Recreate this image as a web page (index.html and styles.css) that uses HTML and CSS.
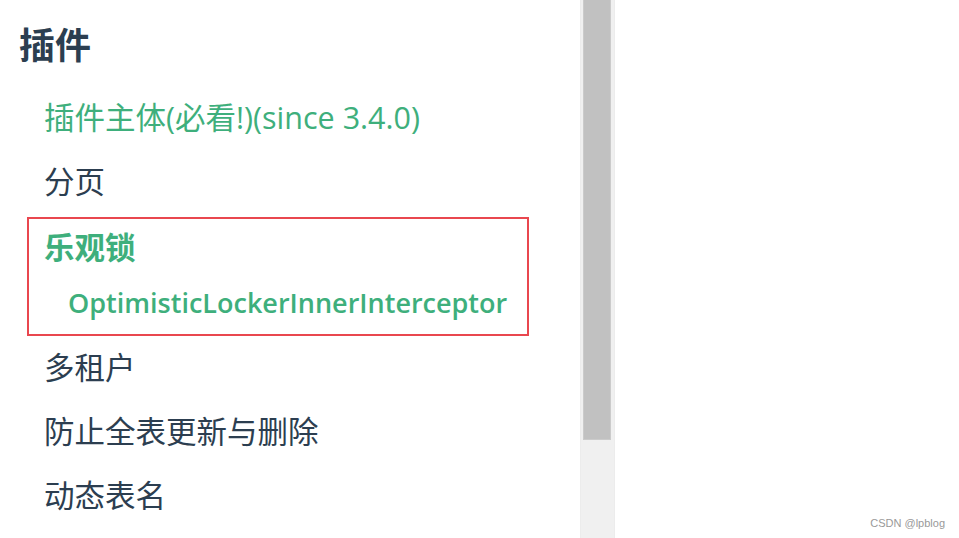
FILE: index.html
```html
<!DOCTYPE html>
<html lang="zh-CN">
<head>
  <meta charset="UTF-8">
  <meta name="viewport" content="width=device-width, initial-scale=1.0">
  <title>插件</title>
  <link rel="stylesheet" href="styles.css">
</head>
<body>
  <div class="page">
    <aside class="sidebar">
      <h2 class="group-title">插件</h2>
      <ul class="links">
        <li class="link active">插件主体(必看!)(since 3.4.0)</li>
        <li class="link">分页</li>
        <li class="marked">
          <div class="link current">乐观锁</div>
          <div class="sub-link">OptimisticLockerInnerInterceptor</div>
        </li>
        <li class="link">多租户</li>
        <li class="link">防止全表更新与删除</li>
        <li class="link">动态表名</li>
      </ul>
    </aside>
    <div class="scrollbar">
      <div class="thumb"></div>
    </div>
    <main class="content">
      <span class="watermark">CSDN @lpblog</span>
    </main>
  </div>
</body>
</html>
```

FILE: styles.css
```css
html, body {
  margin: 0;
  padding: 0;
  height: 100%;
  background-color: #fff;
}
body {
  font-family: "Open Sans", "Noto Sans CJK SC", sans-serif;
  color: #2c3e50;
  overflow: hidden;
}
.page {
  display: flex;
  height: 538px;
}
.sidebar {
  width: 580px;
  flex-shrink: 0;
}
.group-title {
  margin: 21px 0 0 19px;
  font-size: 36px;
  line-height: 44px;
  font-weight: 700;
  font-family: "Noto Sans CJK SC", sans-serif;
}
.links {
  list-style-type: none;
  margin: 20px 0 0;
  padding: 0;
}
.link {
  padding-left: 44px;
  font-size: 30.5px;
  line-height: 64px;
  color: #2c3e50;
  white-space: nowrap;
}
.active {
  color: #3eaf7c;
}
.marked {
  margin: 4px 0 -1px 27px;
  width: 498px;
  border: 2px solid #e9474f;
  padding-bottom: 3px;
}
.marked .link {
  padding-left: 15px;
  line-height: 56px;
}
.current {
  color: #3eaf7c;
  font-weight: 700;
}
.sub-link {
  padding-left: 39px;
  font-size: 27px;
  line-height: 56px;
  font-weight: 600;
  color: #3eaf7c;
  white-space: nowrap;
}
.scrollbar {
  width: 35px;
  flex-shrink: 0;
  background-color: #f0f0f0;
  box-sizing: border-box;
  border-left: 1px solid #ececec;
  border-right: 1px solid #ececec;
  padding: 0 3px 0 2px;
}
.thumb {
  height: 440px;
  background-color: #c1c1c1;
  border: 1px solid #cbcbcb;
  border-top: 0;
  box-sizing: border-box;
}
.content {
  flex: 1;
  position: relative;
}
.watermark {
  position: absolute;
  right: 14px;
  bottom: 9px;
  font-family: "Liberation Sans", sans-serif;
  font-size: 11px;
  color: #999;
}
```
